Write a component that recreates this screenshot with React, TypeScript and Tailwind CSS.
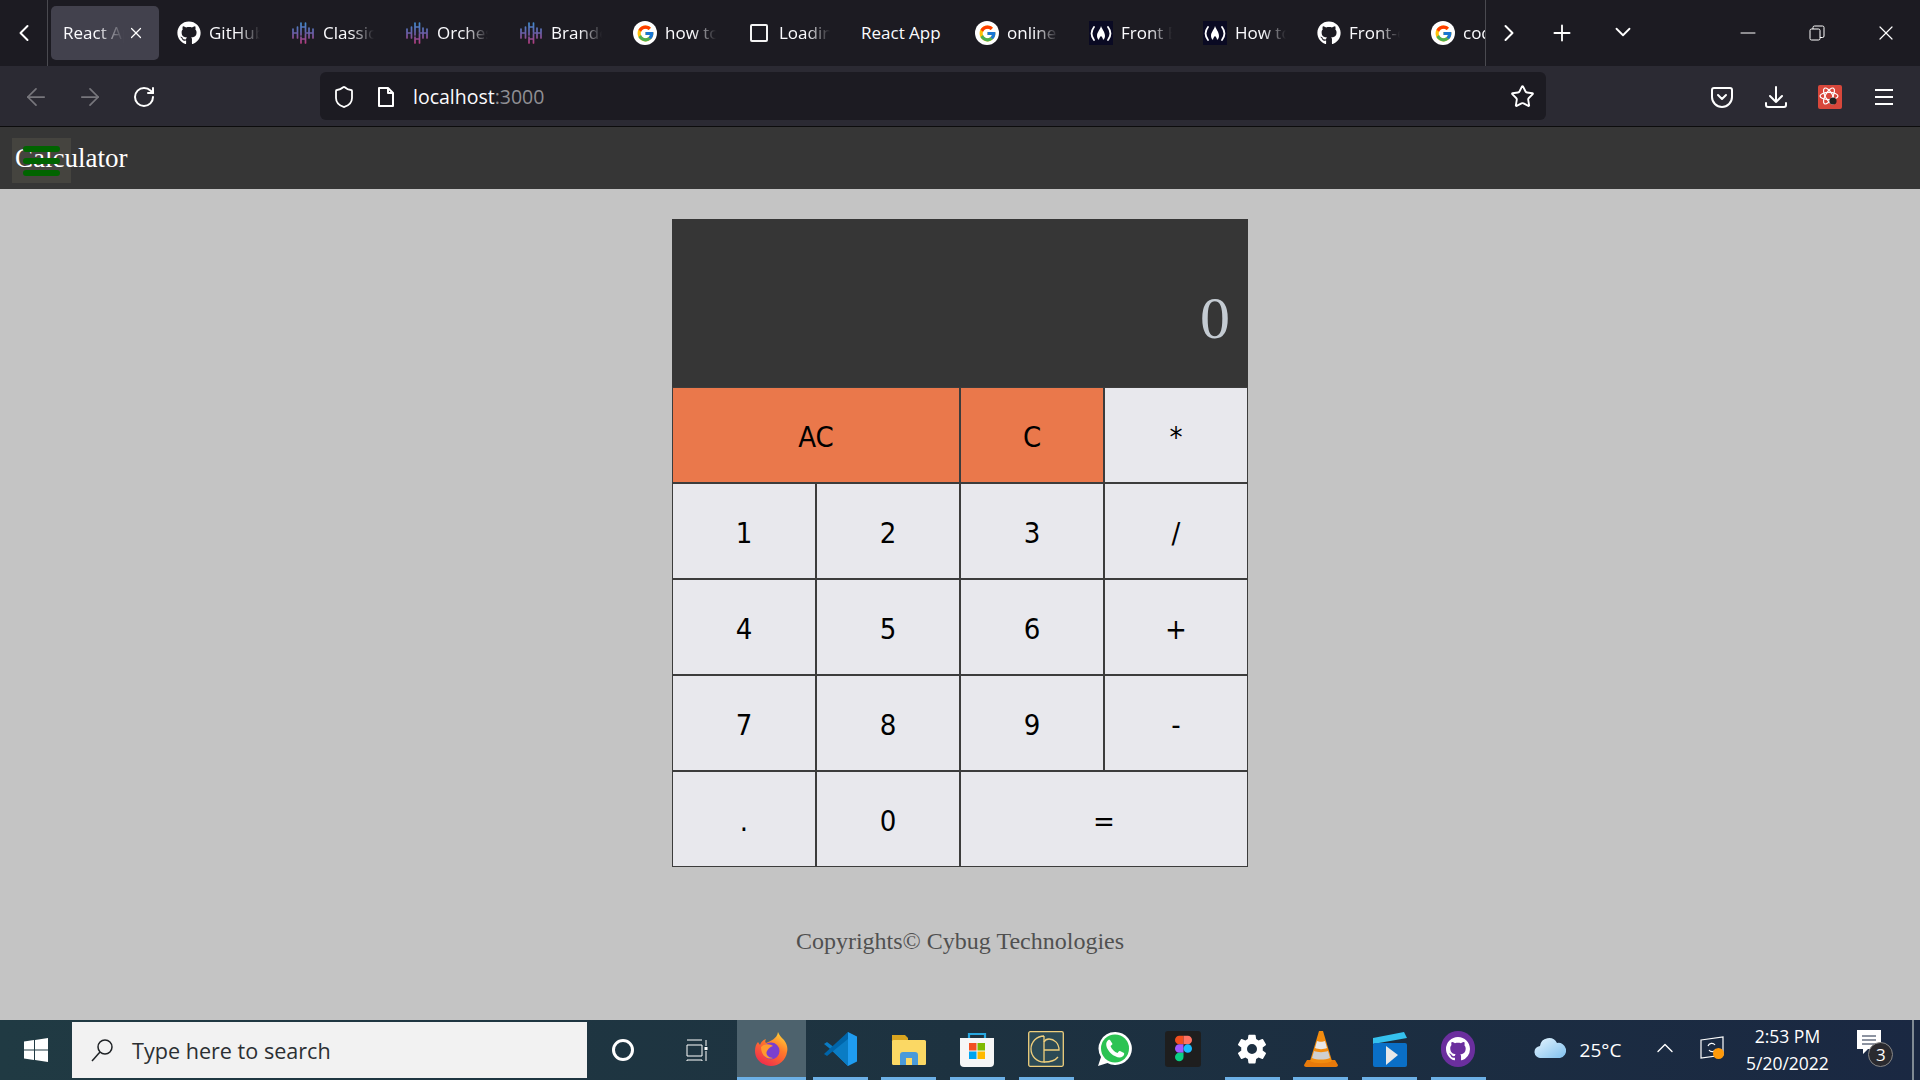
import React from "react";
import { ArrowLeft, ArrowRight, ChevronDown, ChevronLeft, ChevronRight, ChevronUp, Minus, Plus, RotateCw, Shield, Star, X } from "lucide-react";
import { FaGithub } from "react-icons/fa";
import { FcGoogle } from "react-icons/fc";
import { IoSettingsSharp } from "react-icons/io5";
import { VscGithubInverted } from "react-icons/vsc";

const ui = "font-['Open_Sans','Noto_Sans',sans-serif]";

function WaveIcon() {
  return (
    <svg viewBox="0 0 24 24" className="w-6 h-6" fill="none" stroke="url(#wave)" strokeWidth="1.7" strokeLinecap="round">
      <defs>
        <linearGradient id="wave" gradientUnits="userSpaceOnUse" x1="0" y1="1" x2="0" y2="23">
          <stop offset="0" stopColor="#3f8fd2" />
          <stop offset="0.5" stopColor="#6a5fa8" />
          <stop offset="1" stopColor="#b83a7c" />
        </linearGradient>
      </defs>
      <path d="M2 8v9M6.500 6v11M2 12h4.500" />
      <path d="M10 2v12M14.500 2v9M10 6h4.500" />
      <path d="M10 16v6M14.500 13v9M10 18h4.500" />
      <path d="M18 7v10M22 8v9M18 12h4" />
      <path d="M14.500 12H18" />
    </svg>
  );
}

function CampIcon() {
  return (
    <div className="w-6 h-[24px] bg-[#0a0a23] flex items-center justify-center">
      <svg viewBox="0 0 24 24" className="w-6 h-6" fill="none" stroke="#fff" strokeWidth="1.800" strokeLinecap="round">
        <path d="M5 6c-3 4-3 9 0 13M19 6c3 4 3 9 0 13" />
        <path d="M12 5c1 3 4 6 4 10 0 2-1 3-2 4 0-2-1-3-2-4-1 1-2 2-2 4-1-1-2-2-2-4 0-4 3-6 4-10z" fill="#fff" stroke="none" />
      </svg>
    </div>
  );
}

const whiteG = (
  <div className="w-6 h-6 rounded-full bg-white flex items-center justify-center">
    <FcGoogle className="w-[19px] h-[19px]" />
  </div>
);
const gh = <FaGithub className="w-6 h-6 text-white" />;
const loading = <div className="w-[18px] h-[18px] border-2 border-[#f4f4f4] rounded-[2px]" />;

const tabs: { title: string; icon?: React.ReactNode; active?: boolean; solid?: boolean }[] = [
  { title: "React App", active: true },
  { title: "GitHub", icon: gh },
  { title: "Classic", icon: <WaveIcon /> },
  { title: "Orchestra", icon: <WaveIcon /> },
  { title: "Branded", icon: <WaveIcon /> },
  { title: "how to", icon: whiteG },
  { title: "Loading", icon: loading },
  { title: "React App", solid: true },
  { title: "online", icon: whiteG },
  { title: "Front End", icon: <CampIcon /> },
  { title: "How to", icon: <CampIcon /> },
  { title: "Front-end", icon: gh },
  { title: "code", icon: whiteG },
];

function Tab({ title, icon, active, solid }: (typeof tabs)[number]) {
  return (
    <div className="w-[114px] shrink-0 h-[54px] relative">
      <div className={`h-full w-[108px] rounded-[5px] flex items-center ${active ? "bg-[#42414d]" : ""}`}>
        {icon && <div className="w-12 shrink-0 flex justify-center -mr-1">{icon}</div>}
        <span
          className={`text-[17px] text-[#fbfbfe] whitespace-nowrap overflow-hidden ${icon ? "w-[51px]" : active ? "w-[61px] ml-3" : "ml-3"} ${solid ? "" : "[mask-image:linear-gradient(to_right,#000_55%,transparent)]"}`}
        >
          {title}
        </span>
        {active && <X className="w-[18px] h-[18px] text-white ml-[3px]" strokeWidth={1.6} />}
      </div>
    </div>
  );
}

function TabBar() {
  return (
    <div className="h-[66px] bg-[#1c1b22] flex">
      <div className="w-12 h-full border-r border-[#4a4a50] flex items-center justify-center">
        <ChevronLeft className="w-7 h-7 text-white -mt-[1px]" strokeWidth={1.7} />
      </div>
      <div className="w-[1437px] pl-[3px] pt-[6px] flex overflow-hidden">
        {tabs.map((t, i) => (
          <Tab key={i} {...t} />
        ))}
      </div>
      <div className="w-[46px] h-full border-l border-[#4a4a50] flex items-center justify-center">
        <ChevronRight className="w-7 h-7 text-white" strokeWidth={1.7} />
      </div>
      <div className="w-[62px] flex items-center justify-center">
        <Plus className="w-[26px] h-[26px] text-white" strokeWidth={1.7} />
      </div>
      <div className="w-[60px] flex items-center justify-center -mt-[2px]">
        <ChevronDown className="w-[26px] h-[26px] text-white" strokeWidth={1.7} />
      </div>
      <div className="flex-1 flex items-center text-white">
        <div className="w-[69px] ml-[60px] flex justify-center">
          <Minus className="w-6 h-6" strokeWidth={1} />
        </div>
        <div className="w-[69px] flex justify-center">
          <svg viewBox="0 0 16 16" className="w-4 h-4" fill="none" stroke="currentColor" strokeWidth="1">
            <rect x="1" y="4" width="10" height="11" rx="1.5" />
            <path d="M4 4V2.5A1.5 1.5 0 0 1 5.5 1h8A1.5 1.5 0 0 1 15 2.5V11a1.5 1.5 0 0 1-1.5 1.5H11" />
          </svg>
        </div>
        <div className="w-[69px] flex justify-center">
          <X className="w-[24px] h-[24px]" strokeWidth={1.2} />
        </div>
      </div>
    </div>
  );
}

function ToolBar() {
  return (
    <div className="h-[61px] bg-[#2b2a33] border-b border-[#0c0c0d] flex items-start pt-[7px] text-white">
      <div className="w-[63px] h-12 flex items-center justify-center pl-[8px]">
        <ArrowLeft className="w-7 h-7 text-[#77767c]" strokeWidth={1.5} />
      </div>
      <div className="w-[54px] h-12 flex items-center justify-center">
        <ArrowRight className="w-7 h-7 text-[#77767c]" strokeWidth={1.5} />
      </div>
      <div className="w-[54px] h-12 flex items-center justify-center">
        <RotateCw className="w-6 h-6" strokeWidth={2} />
      </div>
      <div className="ml-[149px] w-[1226px] h-12 -mt-[1px] bg-[#1c1b22] rounded-[6px] flex items-center">
        <Shield className="w-6 h-6 ml-3 mt-[1px]" strokeWidth={1.8} />
        <svg viewBox="0 0 20 24" className="w-5 h-6 ml-5 mt-[1px]" fill="none" stroke="currentColor" strokeWidth="2" strokeLinejoin="round">
          <path d="M3 3h9l5 5v13H3z" />
          <path d="M12 3v5h5" />
        </svg>
        <span className="ml-[17px] text-[19.500px] mt-[2px] text-[#fbfbfe]">
          localhost<span className="text-[#8f8f94]">:3000</span>
        </span>
        <Star className="w-[25px] h-[25px] ml-auto mr-[11px] mt-[1px]" strokeWidth={1.8} />
      </div>
      <div className="ml-[149px] flex">
        <div className="w-[54px] h-12 flex items-center justify-center">
          <svg viewBox="0 0 24 24" className="w-[24px] h-[24px]" fill="none" stroke="currentColor" strokeWidth="2" strokeLinecap="round" strokeLinejoin="round">
            <path d="M4 3h16a2 2 0 0 1 2 2v7a10 10 0 0 1-20 0V5a2 2 0 0 1 2-2z" />
            <path d="M8 10l4 4 4-4" />
          </svg>
        </div>
        <div className="w-[54px] h-12 flex items-center justify-center">
          <svg viewBox="0 0 24 24" className="w-[24px] h-[24px]" fill="none" stroke="currentColor" strokeWidth="2" strokeLinecap="round" strokeLinejoin="round">
            <path d="M12 2v15M6 11l6 6 6-6" />
            <path d="M2 18v2a2 2 0 0 0 2 2h16a2 2 0 0 0 2-2v-2" />
          </svg>
        </div>
        <div className="w-[54px] h-12 flex items-center justify-center">
          <div className="w-6 h-6 bg-[#d8473b] rounded-[2px] flex items-center justify-center">
            <svg viewBox="0 0 24 24" className="w-6 h-6" fill="none" stroke="#fff" strokeWidth="1.2">
              <ellipse cx="11" cy="11" rx="9" ry="3.6" />
              <ellipse cx="11" cy="11" rx="9" ry="3.6" transform="rotate(60 11 11)" />
              <ellipse cx="11" cy="11" rx="9" ry="3.6" transform="rotate(120 11 11)" />
              <circle cx="15" cy="16" r="3.6" fill="#222" stroke="none" />
            </svg>
          </div>
        </div>
        <div className="w-[54px] h-12 flex flex-col items-center justify-center gap-[5px]">
          <div className="w-[18px] h-[2px] bg-white" />
          <div className="w-[18px] h-[2px] bg-white" />
          <div className="w-[18px] h-[2px] bg-white" />
        </div>
      </div>
    </div>
  );
}

function NavBar() {
  return (
    <div className="h-[62px] bg-[#363636] flex items-center pl-[15px] relative">
      {/* toggler box is under the brand text, its bars are over it */}
      <div className="absolute left-3 top-[11px] w-[59px] h-[45px] bg-[#45443f]" />
      <span className="relative text-[27px] text-white font-['Liberation_Serif',serif]">Calculator</span>
      <div className="absolute left-3 top-[11px] w-[59px] h-[45px] flex flex-col items-center justify-center gap-[6px]">
        <div className="w-[37px] h-[6px] rounded-full bg-[#006400]" />
        <div className="w-[37px] h-[6px] rounded-full bg-[#006400]" />
        <div className="w-[37px] h-[6px] rounded-full bg-[#006400]" />
      </div>
    </div>
  );
}

const keys: { label: string; wide?: boolean; orange?: boolean }[] = [
  { label: "AC", wide: true, orange: true },
  { label: "C", orange: true },
  { label: "*" },
  { label: "1" },
  { label: "2" },
  { label: "3" },
  { label: "/" },
  { label: "4" },
  { label: "5" },
  { label: "6" },
  { label: "+" },
  { label: "7" },
  { label: "8" },
  { label: "9" },
  { label: "-" },
  { label: "." },
  { label: "0" },
  { label: "=", wide: true },
];

function Calculator() {
  return (
    <div className="w-[576px]">
      <div className="h-[168px] bg-[#363636] flex items-center justify-end pt-[30px] pr-[18px] text-[60px] text-[#c4cbd2] font-['Liberation_Serif',serif]">
        0
      </div>
      <div className="grid grid-cols-4">
        {keys.map((k, i) => (
          <button
            key={i}
            className={`h-[96px] pt-[5px] border border-[#3c3c3c] text-[29px] text-black [font-stretch:condensed] font-['DejaVu_Sans',sans-serif] ${k.wide ? "col-span-2" : ""} ${k.orange ? "bg-[#ea784b]" : "bg-[#e8e8ed]"}`}
          >
            {k.label}
          </button>
        ))}
      </div>
    </div>
  );
}

function Firefox() {
  return (
    <svg viewBox="0 0 36 36" className="w-9 h-9">
      <defs>
        <linearGradient id="ff" x1="0.8" y1="0" x2="0.2" y2="1">
          <stop offset="0" stopColor="#ffd43a" />
          <stop offset="0.4" stopColor="#ff7a2a" />
          <stop offset="1" stopColor="#f0264f" />
        </linearGradient>
      </defs>
      <path d="M25 1c1 3 3 5 6 8 3 4 4 8 3 12-1 8-8 14-16 14S2 29 2 20c0-4 1-7 3-9l2 3c1-3 3-5 6-6-1 2-1 3 0 4 4-2 11-4 12-11z" fill="url(#ff)" />
      <circle cx="18" cy="20" r="8.5" fill="#7a3fd0" />
      <path d="M8 16c4-4 9-3 12-1-3 1-4 2-6 5-2 4 2 7 6 7-5 2-12-2-12-11z" fill="#ff9a2e" />
    </svg>
  );
}

function VsCode() {
  return (
    <svg viewBox="0 0 36 36" className="w-9 h-9">
      <path d="M26 1l9 4.5v25L26 35 11 20l15-11z" fill="#1f9cf0" />
      <path d="M26 1v34L7 17 2 13l3-2 8 6z" fill="#0a7cc4" />
      <path d="M2 23l3 2 21-17V1z" fill="#0065a9" />
    </svg>
  );
}

function Folder() {
  return (
    <svg viewBox="0 0 36 36" className="w-9 h-9">
      <path d="M1 4h13l3 3v5H1z" fill="#d9a520" />
      <rect x="1" y="9" width="34" height="25" rx="1.5" fill="#fbd864" />
      <path d="M9 34V24a3 3 0 0 1 3-3h12a3 3 0 0 1 3 3v10h-6v-7h-6v7z" fill="#4a9ad9" />
    </svg>
  );
}

function Store() {
  return (
    <svg viewBox="0 0 36 36" className="w-9 h-9">
      <path d="M10 8V3h16v5" fill="none" stroke="#29a8e0" strokeWidth="2.2" />
      <path d="M1 7h34v25a4 4 0 0 1-4 4H5a4 4 0 0 1-4-4z" fill="#f6f6f6" />
      <rect x="10" y="12" width="7.5" height="7.5" fill="#f25022" />
      <rect x="18.5" y="12" width="7.5" height="7.5" fill="#7fba00" />
      <rect x="10" y="20.5" width="7.5" height="7.5" fill="#00a4ef" />
      <rect x="18.5" y="20.5" width="7.5" height="7.5" fill="#ffb900" />
    </svg>
  );
}

function EditorLogo() {
  return (
    <svg viewBox="0 0 36 36" className="w-9 h-9" fill="none" stroke="#f0cf7c" strokeWidth="1.3">
      <rect x="0.7" y="0.7" width="34.600" height="34.600" rx="1.5" fill="#2c4a55" />
      <path d="M16 5A13 13 0 1 0 16 31V5" />
      <path d="M16 19H31C31 12 26 8 21 8c-2 0-4 1-5 3" />
      <path d="M16 31c6 0 11-1 14-5" />
    </svg>
  );
}

function WhatsApp() {
  return (
    <svg viewBox="0 0 36 36" className="w-9 h-9">
      <path d="M18 1a16.5 16.5 0 0 0-14 25L1 35l9.500-3A16.500 16.500 0 1 0 18 1z" fill="#fff" />
      <circle cx="18" cy="17.500" r="14" fill="#2cc353" />
      <path d="M13 9c-1-.5-2 0-3 1.500-2 3 0 8 4 12 4 3.500 9 5 11.500 3 1.500-1 2-2.500 1.500-3.500l-4-2c-.6-.2-1 0-1.500.7l-1 1.300c-3-1-6-4-7-7l1.200-1c.7-.6.800-1 .6-1.600z" fill="#fff" />
    </svg>
  );
}

function Figma() {
  return (
    <div className="w-9 h-9 bg-[#1e1e1e] rounded-[3px] flex items-center justify-center">
      <svg viewBox="0 0 16 24" className="w-[17px] h-[27px]">
        <path d="M8 0H4a4 4 0 0 0 0 8h4z" fill="#f24e1e" />
        <path d="M8 0h4a4 4 0 0 1 0 8H8z" fill="#ff7262" />
        <path d="M8 8H4a4 4 0 0 0 0 8h4z" fill="#a259ff" />
        <circle cx="12" cy="12" r="4" fill="#1abcfe" />
        <path d="M4 16h4v4a4 4 0 1 1-4-4z" fill="#0acf83" />
      </svg>
    </div>
  );
}

function Vlc() {
  return (
    <svg viewBox="0 0 36 36" className="w-9 h-9">
      <path d="M4 29h28l3 5c0 1-1 2-2 2H3c-1 0-2-1-2-2z" fill="#e87a0a" />
      <path d="M16 0h4l9 30c-4 3-18 3-22 0z" fill="#f28c0f" />
      <path d="M14 10c2 1 6 1 8 0l2 7c-3 1.500-9 1.500-12 0z" fill="#e8e8e8" />
      <path d="M11 20c4 1.500 10 1.500 14 0l2 7c-5 2-13 2-18 0z" fill="#cfcfcf" />
    </svg>
  );
}

function Video() {
  return (
    <svg viewBox="0 0 36 36" className="w-9 h-9">
      <path d="M1 7L32 1l3 6-34 6z" fill="#35c1ee" />
      <rect x="1" y="12" width="34" height="24" rx="2" fill="#0a6fc7" />
      <path d="M14 15l12 9-12 10z" fill="#e8e8e8" />
    </svg>
  );
}

function GithubDesktop() {
  return (
    <div className="w-[34px] h-[36px] rounded-full bg-[#6b2f9e] flex items-center justify-center">
      <VscGithubInverted className="w-[24px] h-[24px] text-white" />
    </div>
  );
}

function Slot({ children, line, tile }: { children?: React.ReactNode; line?: boolean; tile?: boolean }) {
  return (
    <div className={`w-[68.700px] shrink-0 h-full flex flex-col items-center ${tile ? "bg-[#4d626d]" : ""}`}>
      <div className="flex-1 flex items-center justify-center">{children}</div>
      <div className={`w-[55px] h-[3px] ${line ? "bg-[#6cb0e6]" : ""} ${tile ? "w-full" : ""}`} />
    </div>
  );
}

function Taskbar() {
  return (
    <div className={`h-[60px] bg-gradient-to-r from-[#203a43] via-[#1d3240] to-[#1a2842] flex text-white ${ui}`}>
      <div className="w-[72px] flex items-center justify-center">
        <svg viewBox="0 0 24 24" className="w-[24px] h-[24px]" fill="#fff">
          <path d="M0 3.500l10-1.400V11.500H0zM11 2l13-2v11.500H11zM0 12.500h10v9.400L0 20.500zM11 12.500h13V24l-13-2z" />
        </svg>
      </div>
      <div className="w-[515px] my-[2px] bg-[#f2f2f2] flex items-center pl-[18px] text-[#2b2f33]">
        <svg viewBox="0 0 24 24" className="w-6 h-6" fill="none" stroke="#1f2326" strokeWidth="1.500">
          <circle cx="15" cy="9" r="7" />
          <path d="M10 14L2 23" />
        </svg>
        <span className="ml-[18px] mt-[3px] text-[21.600px]">Type here to search</span>
      </div>
      <div className="w-[72px] flex items-center justify-center">
        <div className="w-[22px] h-[22px] rounded-full border-[3px] border-white" />
      </div>
      <div className="w-[74px] flex items-center justify-center">
        <svg viewBox="0 0 24 24" className="w-6 h-7" fill="none" stroke="#fff" strokeWidth="1">
          <path d="M3 2h15M3 7h15v11H3zM3 23v-1h15v1M22 2v6M22 13v10" />
          <rect x="21" y="9.500" width="2" height="2" fill="#fff" />
        </svg>
      </div>
      <div className="w-[4px]" />
      <Slot tile line>
        <Firefox />
      </Slot>
      <Slot line><VsCode /></Slot>
      <Slot line><Folder /></Slot>
      <Slot line><Store /></Slot>
      <Slot line><EditorLogo /></Slot>
      <Slot><WhatsApp /></Slot>
      <Slot><Figma /></Slot>
      <Slot line><IoSettingsSharp className="w-8 h-8 text-white" /></Slot>
      <Slot line><Vlc /></Slot>
      <Slot line><Video /></Slot>
      <Slot line><GithubDesktop /></Slot>
      <div className="flex-1 flex items-center">
        <svg viewBox="0 0 32 22" className="w-8 h-[22px] ml-[41px] -mt-[6px]">
          <defs>
            <linearGradient id="cloud" x1="0" y1="0" x2="1" y2="1">
              <stop offset="0" stopColor="#e6f5ff" />
              <stop offset="1" stopColor="#7fc0ee" />
            </linearGradient>
          </defs>
          <path d="M7 22a6 6 0 0 1-1-12 9 9 0 0 1 17-3 7 7 0 0 1 3 15z" fill="url(#cloud)" />
        </svg>
        <span className="ml-[14px] text-[19px]">25°C</span>
        <ChevronUp className="w-7 h-7 ml-[30px] -mt-[4px]" strokeWidth={1.200} />
        <div className="w-6 h-6 ml-[21px] relative -mt-[4px]">
          <svg viewBox="0 0 24 24" className="w-6 h-6" fill="none" stroke="#fff" strokeWidth="1.200">
            <path d="M1 4l22-3v18L1 22z" />
            <path d="M8 10a4 4 0 0 1 7-1M16 13a4 4 0 0 1-7 1" />
          </svg>
          <div className="absolute right-0 bottom-[1px] w-[11px] h-[11px] rounded-full bg-[#ff9a0a]" />
        </div>
        <div className="w-[96px] ml-[15px] text-center text-[17.500px] leading-[27px]">
          <div>2:53 PM</div>
          <div>5/20/2022</div>
        </div>
        <div className="w-[34px] h-[36px] ml-[22px] relative -mt-[4px]">
          <svg viewBox="0 0 24 24" className="w-6 h-6" fill="#fff">
            <path d="M0 0h24v19h-13l-5 5v-5H0z" />
            <path d="M5 6h14M5 10h14M5 14h14" stroke="#1a2842" strokeWidth="1" />
          </svg>
          <div className="absolute left-[11px] top-[12px] w-[25px] h-[25px] rounded-full bg-[#2a2a2f] border border-[#888] flex items-center justify-center text-[17px]">
            3
          </div>
        </div>
      </div>
      <div className="w-[8px] border-l-2 border-[#7f8a94]" />
    </div>
  );
}

export default function App() {
  return (
    <div className={`h-screen flex flex-col overflow-hidden bg-[#c4c4c4] ${ui}`}>
      <TabBar />
      <ToolBar />
      <NavBar />
      <div className="flex-1 flex flex-col items-center pt-[30px]">
        <Calculator />
        <p className="mt-[56px] text-[24px] text-[#505050] font-['Liberation_Serif',serif]">Copyrights© Cybug Technologies</p>
      </div>
      <Taskbar />
    </div>
  );
}
